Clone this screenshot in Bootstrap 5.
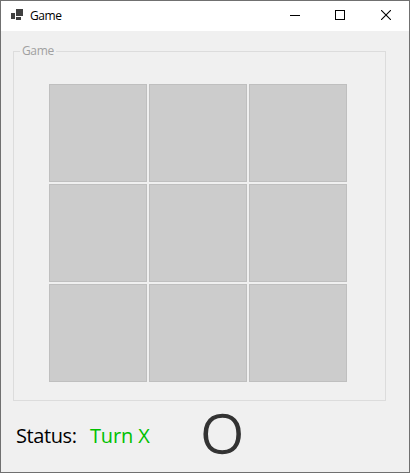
<!DOCTYPE html>
<html lang="en">
<head>
<meta charset="utf-8">
<meta name="viewport" content="width=device-width, initial-scale=1">
<title>Game</title>
<link href="https://cdn.jsdelivr.net/npm/bootstrap@5.3.0/dist/css/bootstrap.min.css" rel="stylesheet">
<style>
body { font-family: "Open Sans", "Noto Sans", sans-serif; background: #f0f0f0; }
.game-window { height: 473px; border: 1px solid #707070; background: #f0f0f0; }
.title-bar { height: 30px; font-size: 12px; color: #000; }
.app-icon { margin: 0 7px 3px 10px; }
.title-text { letter-spacing: -.45px; line-height: 30px; }
.caption-btn { width: 45px; height: 28px; margin-bottom: 2px; }
.caption-close { width: 47px; }
.game-box { margin: 12px 23px 0 12px; height: 358px; padding-top: 8px; }
.box-frame { height: 350px; border: 1px solid #dcdcdc; padding: 32px 0 0 35px; }
.box-legend { left: 7px; top: 0; padding: 0 2px; font-size: 12px; line-height: 16px; color: #a0a0a0; background: #f0f0f0; letter-spacing: -.35px; }
.board { display: grid; grid-template-columns: repeat(3, 98px); grid-auto-rows: 98px; gap: 2px; }
.cell { background: #ccc; border: 1px solid #bfbfbf; }
.status-row { height: 70px; padding-left: 15px; font-size: 20px; line-height: 70px; color: #000; }
.status-label { width: 74px; letter-spacing: -.4px; }
.status-turn { width: 112px; color: #00c000; letter-spacing: -.15px; }
.player-mark { font-size: 53px; line-height: 63px; font-weight: 300; color: #333; -webkit-text-stroke: 1.5px #333; transform: scaleX(1.06); }
</style>
</head>
<body>
<main class="game-window d-flex flex-column overflow-hidden">
  <header class="title-bar bg-white d-flex align-items-center">
    <svg class="app-icon" width="12" height="11" viewBox="0 0 12 11" fill="#404040" shape-rendering="crispEdges"><path d="M5 0h7v7H5zM0 4h4v6H0zM5 8h5v3H5z"/></svg>
    <span class="title-text">Game</span>
    <div class="d-flex ms-auto">
      <button class="caption-btn btn p-0 border-0 rounded-0 d-flex align-items-center justify-content-center" aria-label="Minimize"><svg width="10" height="10" shape-rendering="crispEdges"><path d="M0 5h10v1H0z"/></svg></button>
      <button class="caption-btn btn p-0 border-0 rounded-0 d-flex align-items-center justify-content-center" aria-label="Maximize"><svg width="10" height="10" shape-rendering="crispEdges"><path d="M.5.5h9v9h-9z" fill="none" stroke="#000"/></svg></button>
      <button class="caption-btn caption-close btn p-0 border-0 rounded-0 d-flex align-items-center justify-content-center" aria-label="Close"><svg width="10" height="10"><path d="M0 0l10 10M10 0L0 10" fill="none" stroke="#000" stroke-width="1.1"/></svg></button>
    </div>
  </header>
  <section class="game-box position-relative">
    <div class="box-frame">
      <div class="board">
        <div class="cell"></div><div class="cell"></div><div class="cell"></div>
        <div class="cell"></div><div class="cell"></div><div class="cell"></div>
        <div class="cell"></div><div class="cell"></div><div class="cell"></div>
      </div>
    </div>
    <span class="box-legend position-absolute">Game</span>
  </section>
  <footer class="status-row d-flex">
    <span class="status-label">Status:</span>
    <span class="status-turn">Turn X</span>
    <span class="player-mark">O</span>
  </footer>
</main>
<script src="https://cdn.jsdelivr.net/npm/bootstrap@5.3.0/dist/js/bootstrap.bundle.min.js"></script>
</body>
</html>
